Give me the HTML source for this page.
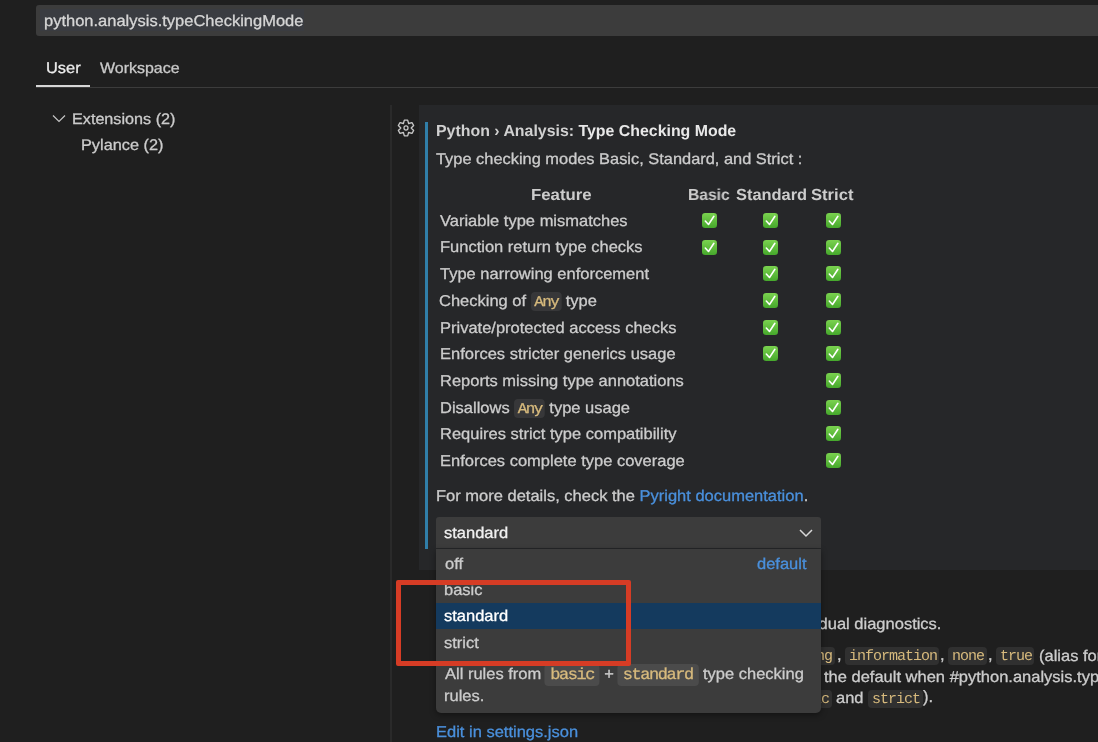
<!DOCTYPE html>
<html><head><meta charset="utf-8">
<style>
*{margin:0;padding:0;box-sizing:border-box}
html,body{width:1098px;height:742px;overflow:hidden;background:#1f1f1f;font-family:"Liberation Sans",sans-serif;color:#cccccc;text-rendering:geometricPrecision}
.a{position:absolute;white-space:nowrap;will-change:transform;transform-origin:0 0}
.t{font-size:16.5px;line-height:1;-webkit-text-stroke:0.3px currentColor}
.b{font-weight:bold;-webkit-text-stroke:0}
#sbox{left:36px;top:5px;width:1070px;height:30.6px;background:#3c3c3c;border-radius:3px}
#selbox{left:40px;top:9px;width:264px;height:22.4px;background:#3a3c41}
#sep{left:36px;top:87px;width:1062px;height:1.3px;background:#3c3c3c}
#uline{left:36px;top:85.4px;width:53.5px;height:2px;background:#d6d6d6}
#vline{left:390px;top:105px;width:2px;height:637px;background:#2a2a2a}
#row{left:419px;top:105px;width:679px;height:465px;background:#262729}
#bar{left:425px;top:122px;width:3px;height:427px;background:#307ea8}
.code{font-family:"Liberation Mono",monospace;background:rgba(255,255,255,.08);color:#d7ba7d;border-radius:4px}
.c13{font-size:15px;letter-spacing:-1.436px;padding:1.7px 2.84px 0 3.31px}
.c15{font-size:16px;letter-spacing:-1.327px;padding:2px 5.3px 2px 5.1px;margin-left:-0.95px}
.chip13{background:rgba(255,255,255,.08);border-radius:4px}
.code13{font-family:"Liberation Mono",monospace;font-size:15px;letter-spacing:-1px;line-height:1;color:#d7ba7d}
#dd{left:436px;top:517px;width:384.5px;height:31px;background:#3c3c3c;border-radius:3px 3px 0 0}
#list{left:436px;top:549px;width:384.5px;height:164px;background:#3c3c3c;border-radius:0 0 5px 5px;box-shadow:0 2px 6px rgba(0,0,0,.4)}
#hl{left:436px;top:603px;width:384.5px;height:26px;background:#143a5e}
#red{left:396px;top:580px;width:235px;height:86px;border:5px solid #d63c25;border-radius:2px}
.link{color:#4a90dc}

</style></head><body>
<svg width="0" height="0" style="position:absolute"><defs>
<linearGradient id="gg" x1="0" y1="0" x2="0" y2="1"><stop offset="0" stop-color="#7ad24f"/><stop offset="1" stop-color="#46a82c"/></linearGradient>
<g id="ck"><rect x="0" y="0" width="15" height="15" rx="3.2" fill="url(#gg)"/><path d="M3.3 8 L6.5 11.5 L11.9 3.3" fill="none" stroke="#fff" stroke-width="1.55" stroke-linecap="round" stroke-linejoin="round"/></g>
</defs></svg>
<div id="sbox" class="a"></div><div id="selbox" class="a"></div>
<div id="search" class="a t" style="left:43.94px;top:14px;font-size:15.6px;transform:scaleX(1.0577);color:#d6d6d6">python.analysis.typeCheckingMode</div>
<div id="user" class="a t" style="left:45.79px;top:61px;font-size:15.505px;transform:scaleX(1.0577);color:#ebebeb">User</div>
<div id="ws" class="a t" style="left:100.00px;top:61px;font-size:15.127px;transform:scaleX(1.0577);color:#cacaca">Workspace</div>
<div id="sep" class="a"></div><div id="uline" class="a"></div>
<svg class="a" style="left:52px;top:114px" width="14" height="9" viewBox="0 0 14 9"><path d="M1 1.5 L7 7.5 L13 1.5" fill="none" stroke="#c5c5c5" stroke-width="1.2"/></svg>
<div id="ext" class="a t" style="left:72.47px;top:112px;font-size:15.316px;transform:scaleX(1.0577);">Extensions (2)</div>
<div id="pyl" class="a t" style="left:81.45px;top:138px;font-size:15.411px;transform:scaleX(1.0577);">Pylance (2)</div>
<div id="vline" class="a"></div><div id="row" class="a"></div><div id="bar" class="a"></div>
<svg class="a" style="left:397px;top:119px" width="18" height="18" viewBox="-0.5 -0.5 17 17"><path fill="none" stroke="#c8c8c8" stroke-width="1.25" stroke-linejoin="round" d="M5.55 3.76 L6.42 0.57 L9.58 0.57 L10.45 3.76 L10.45 3.76 L13.65 2.91 L15.23 5.65 L12.90 8.00 L12.90 8.00 L15.23 10.35 L13.65 13.09 L10.45 12.24 L10.45 12.24 L9.58 15.43 L6.42 15.43 L5.55 12.24 L5.55 12.24 L2.35 13.09 L0.77 10.35 L3.10 8.00 L3.10 8.00 L0.77 5.65 L2.35 2.91 L5.55 3.76Z"/><circle cx="8" cy="8" r="1.9" fill="none" stroke="#c8c8c8" stroke-width="1.2"/></svg>
<div id="title" class="a t b" style="left:435.89px;top:124px;font-size:15.9px;color:#d0d0d0">Python › Analysis: <span style="color:#e8e8e8">Type Checking Mode</span></div>
<div id="desc" class="a t" style="left:436.43px;top:152px;font-size:15.505px;transform:scaleX(1.0577);">Type checking modes Basic, Standard, and Strict :</div>
<div id="hF" class="a t b" style="left:530.68px;top:188px;font-size:16.0px;transform:scaleX(1.05);">Feature</div>
<div id="hB" class="a t b" style="left:687.65px;top:188px;font-size:16.0px;transform:scaleX(0.978);">Basic</div>
<div id="hS" class="a t b" style="left:735.60px;top:188px;font-size:16.0px;transform:scaleX(1.025);">Standard</div>
<div id="hT" class="a t b" style="left:810.98px;top:188px;font-size:16.0px;transform:scaleX(1.039);">Strict</div>
<div id="r0" class="a t" style="left:439.57px;top:214px;font-size:15.6px;transform:scaleX(1.0577);">Variable type mismatches</div>
<svg class="a" style="left:702px;top:212.80px" width="15" height="15" viewBox="0 0 15 15"><use href="#ck"/></svg>
<svg class="a" style="left:763px;top:212.80px" width="15" height="15" viewBox="0 0 15 15"><use href="#ck"/></svg>
<svg class="a" style="left:825.5px;top:212.80px" width="15" height="15" viewBox="0 0 15 15"><use href="#ck"/></svg>
<div id="r1" class="a t" style="left:439.78px;top:240px;font-size:15.6px;transform:scaleX(1.0577);">Function return type checks</div>
<svg class="a" style="left:702px;top:239.50px" width="15" height="15" viewBox="0 0 15 15"><use href="#ck"/></svg>
<svg class="a" style="left:763px;top:239.50px" width="15" height="15" viewBox="0 0 15 15"><use href="#ck"/></svg>
<svg class="a" style="left:825.5px;top:239.50px" width="15" height="15" viewBox="0 0 15 15"><use href="#ck"/></svg>
<div id="r2" class="a t" style="left:439.51px;top:267px;font-size:15.6px;transform:scaleX(1.0577);">Type narrowing enforcement</div>
<svg class="a" style="left:763px;top:266.20px" width="15" height="15" viewBox="0 0 15 15"><use href="#ck"/></svg>
<svg class="a" style="left:825.5px;top:266.20px" width="15" height="15" viewBox="0 0 15 15"><use href="#ck"/></svg>
<div id="r3" class="a t" style="left:439.42px;top:294px;font-size:15.6px;transform:scaleX(1.0577);">Checking of <span class="code c13">Any</span> type</div>
<svg class="a" style="left:763px;top:292.90px" width="15" height="15" viewBox="0 0 15 15"><use href="#ck"/></svg>
<svg class="a" style="left:825.5px;top:292.90px" width="15" height="15" viewBox="0 0 15 15"><use href="#ck"/></svg>
<div id="r4" class="a t" style="left:439.78px;top:321px;font-size:15.6px;transform:scaleX(1.0577);">Private/protected access checks</div>
<svg class="a" style="left:763px;top:319.60px" width="15" height="15" viewBox="0 0 15 15"><use href="#ck"/></svg>
<svg class="a" style="left:825.5px;top:319.60px" width="15" height="15" viewBox="0 0 15 15"><use href="#ck"/></svg>
<div id="r5" class="a t" style="left:439.78px;top:347px;font-size:15.6px;transform:scaleX(1.0577);">Enforces stricter generics usage</div>
<svg class="a" style="left:763px;top:346.30px" width="15" height="15" viewBox="0 0 15 15"><use href="#ck"/></svg>
<svg class="a" style="left:825.5px;top:346.30px" width="15" height="15" viewBox="0 0 15 15"><use href="#ck"/></svg>
<div id="r6" class="a t" style="left:439.78px;top:374px;font-size:15.6px;transform:scaleX(1.0577);">Reports missing type annotations</div>
<svg class="a" style="left:825.5px;top:373.00px" width="15" height="15" viewBox="0 0 15 15"><use href="#ck"/></svg>
<div id="r7" class="a t" style="left:439.77px;top:401px;font-size:15.6px;transform:scaleX(1.0577);">Disallows <span class="code c13">Any</span> type usage</div>
<svg class="a" style="left:825.5px;top:399.70px" width="15" height="15" viewBox="0 0 15 15"><use href="#ck"/></svg>
<div id="r8" class="a t" style="left:439.78px;top:427px;font-size:15.6px;transform:scaleX(1.0577);">Requires strict type compatibility</div>
<svg class="a" style="left:825.5px;top:426.40px" width="15" height="15" viewBox="0 0 15 15"><use href="#ck"/></svg>
<div id="r9" class="a t" style="left:439.78px;top:454px;font-size:15.6px;transform:scaleX(1.0577);">Enforces complete type coverage</div>
<svg class="a" style="left:825.5px;top:453.10px" width="15" height="15" viewBox="0 0 15 15"><use href="#ck"/></svg>
<div id="more" class="a t" style="left:435.98px;top:489px;font-size:15.6px;transform:scaleX(1.0577);">For more details, check the <span class="link">Pyright documentation</span>.</div>
<div id="dual" class="a t" style="left:780.60px;top:617px;font-size:15.6px;transform:scaleX(1.0577);">individual diagnostics.</div>
<div id="the" class="a t" style="left:823.90px;top:670px;font-size:15.6px;transform:scaleX(1.0577);">the default when #python.analysis.typeCheckingMode</div>
<div id="and" class="a t" style="left:836.30px;top:691px;font-size:15.6px;transform:scaleX(1.0577);">and</div>
<div id="alias" class="a t" style="left:1038.68px;top:649px;font-size:15.6px;transform:scaleX(1.0577);">(alias for</div>
<div class="a chip13" style="left:770px;top:647px;width:64.9px;height:18.1px"></div><div class="a code13" style="left:775.5px;top:649.3px">warning</div><div class="a t" style="left:836.5px;top:647px;font-size:16.5px">,</div><div class="a chip13" style="left:844.8px;top:647px;width:93.6px;height:18.1px"></div><div class="a code13" style="left:849px;top:649.3px">information</div><div class="a t" style="left:940px;top:647px;font-size:16.5px">,</div><div class="a chip13" style="left:948.1px;top:647px;width:38.5px;height:18.1px"></div><div class="a code13" style="left:951.5px;top:649.3px">none</div><div class="a t" style="left:988px;top:647px;font-size:16.5px">,</div><div class="a chip13" style="left:996.4px;top:647px;width:38px;height:18.1px"></div><div class="a code13" style="left:1000px;top:649.3px">true</div><div class="a chip13" style="left:784px;top:689.6px;width:47.6px;height:18.1px"></div><div class="a code13" style="left:789px;top:691.9px">basic</div><div class="a chip13" style="left:867.5px;top:689.6px;width:54.8px;height:18.1px"></div><div class="a code13" style="left:871.5px;top:691.9px">strict</div><div class="a t" style="left:923px;top:689.2px;font-size:16.5px">).</div>
<div id="edit" class="a t link" style="left:435.94px;top:725px;font-size:15.6px;transform:scaleX(1.0577);">Edit in settings.json</div>
<div id="dd" class="a"></div>
<div id="ddsel" class="a t" style="left:444.45px;top:526px;font-size:15.6px;transform:scaleX(1.0577);color:#f0f0f0">standard</div>
<svg class="a" style="left:799px;top:528px" width="14" height="10" viewBox="0 0 14 10"><path d="M1 2 L7 8 L13 2" fill="none" stroke="#d8d8d8" stroke-width="1.5"/></svg>
<div id="list" class="a"></div><div id="hl" class="a"></div>
<div id="off" class="a t" style="left:444.53px;top:557px;font-size:15.6px;transform:scaleX(1.0577);">off</div>
<div id="default" class="a t link" style="left:756.60px;top:557px;font-size:15.6px;transform:scaleX(1.0577);">default</div>
<div id="basic" class="a t" style="left:443.76px;top:583px;font-size:15.6px;transform:scaleX(1.0577);">basic</div>
<div id="standard" class="a t" style="left:444.45px;top:609px;font-size:15.6px;transform:scaleX(1.0577);color:#ffffff">standard</div>
<div id="strict" class="a t" style="left:444.38px;top:636px;font-size:15.6px;transform:scaleX(1.0577);">strict</div>
<div id="allrules" class="a t" style="left:444.78px;top:667px;font-size:15.6px;transform:scaleX(1.0577);">All rules from <span class="code c15">basic</span> + <span class="code c15">standard</span> type checking</div>
<div id="rules" class="a t" style="left:444.10px;top:689px;font-size:15.6px;transform:scaleX(1.0577);">rules.</div>
<div id="red" class="a"></div>
</body></html>
